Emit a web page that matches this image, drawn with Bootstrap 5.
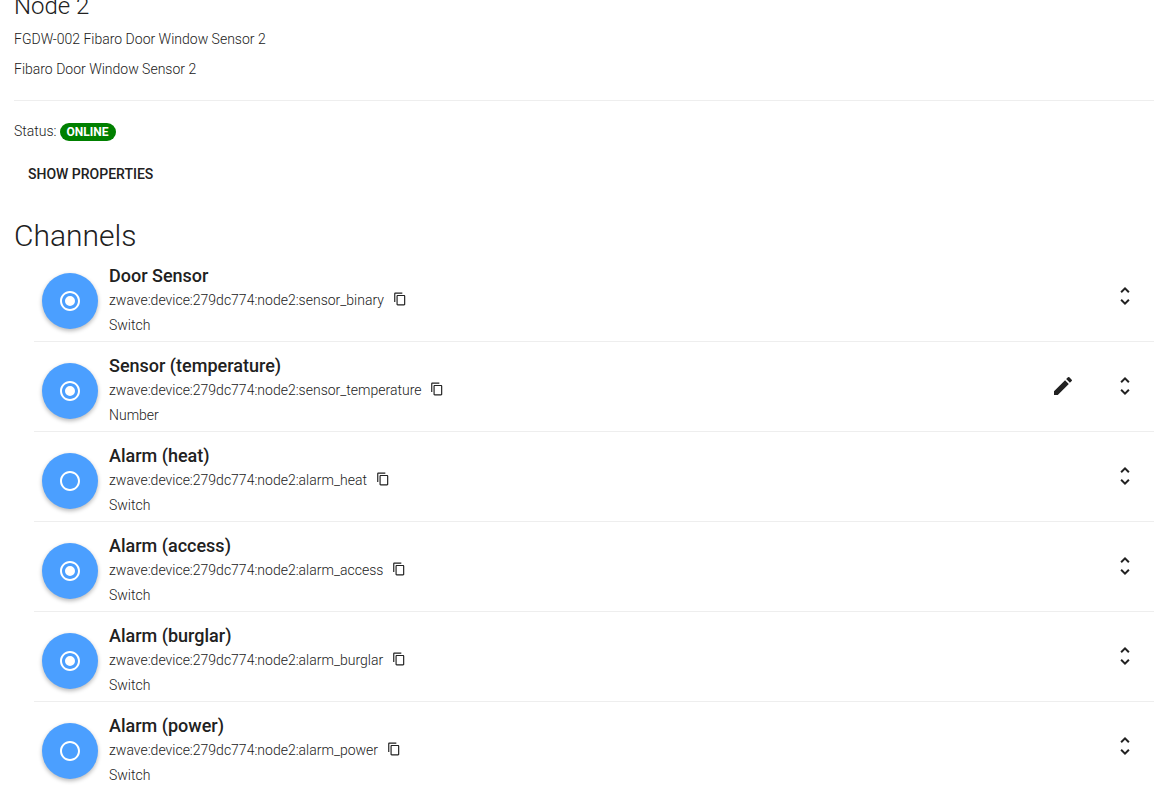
<!DOCTYPE html>
<html lang="en">
<head>
<meta charset="utf-8">
<meta name="viewport" content="width=device-width, initial-scale=1">
<title>Node 2</title>
<link href="https://cdn.jsdelivr.net/npm/bootstrap@5.3.0/dist/css/bootstrap.min.css" rel="stylesheet">
<style>
  body { font-family: Roboto, "Liberation Sans", sans-serif; font-size: 14px; font-weight: 300; line-height: 20px; color: #212121; background: #fff; }
  .thing { padding: 0 12px 0 14px; }
  .thing-title { font-size: 24px; font-weight: 300; line-height: 24px; margin: -6px 0 11px; }
  .thing-line { margin-bottom: 10px; }
  .divider { border-top: 1px solid #eee; opacity: 1; margin: 21px 0 20px; }
  .status-pill { font-size: 12px; font-weight: 700; line-height: 18px; padding: 0 7px; background: #008000; color: #fff; margin: 2px 0 0 3px; }
  .btn-flat { font-size: 14px; font-weight: 500; line-height: 36px; padding: 0 14px; border: 0; color: #212121; margin-top: 15px; }
  .section-title { font-size: 30px; font-weight: 300; line-height: 32px; margin: 28px 0 0; }
  .channels { padding-left: 20px; margin: 0; }
  .channel { height: 90px; border-bottom: 1px solid #eee; padding: 0 8px; }
  .channel-icon { width: 56px; height: 56px; background: #4b9fff; box-shadow: 0 2px 4px rgba(0,0,0,.28); margin: 21px 11px 0 0; }
  .channel-name { font-size: 18px; font-weight: 500; line-height: 24px; margin: 12px 0 0; }
  .channel-line { line-height: 25px; }
  .copy-btn, .tool-btn { border: 0; padding: 0; color: #212121; line-height: 1; }
  .copy-btn { margin: 0 0 4px 9px; }
  .tools { gap: 38px; padding: 32px 9px 0 0; }
  svg { display: block; fill: currentColor; }
</style>
</head>
<body>
<svg class="d-none" aria-hidden="true">
  <symbol id="on" viewBox="0 0 24 24"><path d="M12 7a5 5 0 1 0 0 10 5 5 0 0 0 0-10zm0-5C6.480 2 2 6.480 2 12s4.480 10 10 10 10-4.480 10-10S17.520 2 12 2zm0 18c-4.420 0-8-3.580-8-8s3.580-8 8-8 8 3.580 8 8-3.580 8-8 8z"/></symbol>
  <symbol id="off" viewBox="0 0 24 24"><path d="M12 2C6.480 2 2 6.480 2 12s4.480 10 10 10 10-4.480 10-10S17.520 2 12 2zm0 18c-4.420 0-8-3.580-8-8s3.580-8 8-8 8 3.580 8 8-3.580 8-8 8z"/></symbol>
  <symbol id="copy" viewBox="0 0 24 24"><path d="M16 1H4c-1.100 0-2 .9-2 2v14h2V3h12V1zm3 4H8c-1.100 0-2 .9-2 2v14c0 1.100.9 2 2 2h11c1.100 0 2-.9 2-2V7c0-1.100-.9-2-2-2zm0 16H8V7h11v14z"/></symbol>
  <symbol id="edit" viewBox="0 0 24 24"><path d="M3 17.250V21h3.750L17.810 9.940l-3.750-3.750L3 17.250zM20.710 7.040a1 1 0 0 0 0-1.410l-2.340-2.340a1 1 0 0 0-1.410 0l-1.830 1.830 3.750 3.750 1.830-1.830z"/></symbol>
  <symbol id="unfold" viewBox="0 0 24 24"><path d="M12 5.830L15.170 9l1.410-1.410L12 3 7.410 7.590 8.830 9 12 5.830zm0 12.340L8.830 15l-1.410 1.410L12 21l4.590-4.590L15.170 15 12 18.170z"/></symbol>
</svg>
<div class="vh-100 overflow-hidden">
<main class="thing">
  <h3 class="thing-title">Node 2</h3>
  <p class="thing-line">FGDW-002 Fibaro Door Window Sensor 2</p>
  <p class="thing-line">Fibaro Door Window Sensor 2</p>
  <hr class="divider">
  <div class="d-flex align-items-center"><span>Status:</span><span class="status-pill rounded-pill">ONLINE</span></div>
  <button type="button" class="btn btn-flat">SHOW PROPERTIES</button>
  <h2 class="section-title">Channels</h2>
  <ul class="channels list-unstyled">
    <li class="channel d-flex align-items-start">
      <div class="channel-icon rounded-circle d-flex align-items-center justify-content-center text-white flex-shrink-0"><svg width="24" height="24"><use href="#on"/></svg></div>
      <div class="flex-grow-1">
        <h4 class="channel-name">Door Sensor</h4>
        <div class="channel-line d-flex align-items-center"><span>zwave:device:279dc774:node2:sensor_binary</span><button type="button" class="btn copy-btn" aria-label="Copy"><svg width="14" height="14"><use href="#copy"/></svg></button></div>
        <div class="channel-line">Switch</div>
      </div>
      <div class="tools d-flex"><button type="button" class="btn tool-btn" aria-label="Expand"><svg width="24" height="24"><use href="#unfold"/></svg></button></div>
    </li>
    <li class="channel d-flex align-items-start">
      <div class="channel-icon rounded-circle d-flex align-items-center justify-content-center text-white flex-shrink-0"><svg width="24" height="24"><use href="#on"/></svg></div>
      <div class="flex-grow-1">
        <h4 class="channel-name">Sensor (temperature)</h4>
        <div class="channel-line d-flex align-items-center"><span>zwave:device:279dc774:node2:sensor_temperature</span><button type="button" class="btn copy-btn" aria-label="Copy"><svg width="14" height="14"><use href="#copy"/></svg></button></div>
        <div class="channel-line">Number</div>
      </div>
      <div class="tools d-flex"><button type="button" class="btn tool-btn" aria-label="Edit"><svg width="24" height="24"><use href="#edit"/></svg></button><button type="button" class="btn tool-btn" aria-label="Expand"><svg width="24" height="24"><use href="#unfold"/></svg></button></div>
    </li>
    <li class="channel d-flex align-items-start">
      <div class="channel-icon rounded-circle d-flex align-items-center justify-content-center text-white flex-shrink-0"><svg width="24" height="24"><use href="#off"/></svg></div>
      <div class="flex-grow-1">
        <h4 class="channel-name">Alarm (heat)</h4>
        <div class="channel-line d-flex align-items-center"><span>zwave:device:279dc774:node2:alarm_heat</span><button type="button" class="btn copy-btn" aria-label="Copy"><svg width="14" height="14"><use href="#copy"/></svg></button></div>
        <div class="channel-line">Switch</div>
      </div>
      <div class="tools d-flex"><button type="button" class="btn tool-btn" aria-label="Expand"><svg width="24" height="24"><use href="#unfold"/></svg></button></div>
    </li>
    <li class="channel d-flex align-items-start">
      <div class="channel-icon rounded-circle d-flex align-items-center justify-content-center text-white flex-shrink-0"><svg width="24" height="24"><use href="#on"/></svg></div>
      <div class="flex-grow-1">
        <h4 class="channel-name">Alarm (access)</h4>
        <div class="channel-line d-flex align-items-center"><span>zwave:device:279dc774:node2:alarm_access</span><button type="button" class="btn copy-btn" aria-label="Copy"><svg width="14" height="14"><use href="#copy"/></svg></button></div>
        <div class="channel-line">Switch</div>
      </div>
      <div class="tools d-flex"><button type="button" class="btn tool-btn" aria-label="Expand"><svg width="24" height="24"><use href="#unfold"/></svg></button></div>
    </li>
    <li class="channel d-flex align-items-start">
      <div class="channel-icon rounded-circle d-flex align-items-center justify-content-center text-white flex-shrink-0"><svg width="24" height="24"><use href="#on"/></svg></div>
      <div class="flex-grow-1">
        <h4 class="channel-name">Alarm (burglar)</h4>
        <div class="channel-line d-flex align-items-center"><span>zwave:device:279dc774:node2:alarm_burglar</span><button type="button" class="btn copy-btn" aria-label="Copy"><svg width="14" height="14"><use href="#copy"/></svg></button></div>
        <div class="channel-line">Switch</div>
      </div>
      <div class="tools d-flex"><button type="button" class="btn tool-btn" aria-label="Expand"><svg width="24" height="24"><use href="#unfold"/></svg></button></div>
    </li>
    <li class="channel d-flex align-items-start">
      <div class="channel-icon rounded-circle d-flex align-items-center justify-content-center text-white flex-shrink-0"><svg width="24" height="24"><use href="#off"/></svg></div>
      <div class="flex-grow-1">
        <h4 class="channel-name">Alarm (power)</h4>
        <div class="channel-line d-flex align-items-center"><span>zwave:device:279dc774:node2:alarm_power</span><button type="button" class="btn copy-btn" aria-label="Copy"><svg width="14" height="14"><use href="#copy"/></svg></button></div>
        <div class="channel-line">Switch</div>
      </div>
      <div class="tools d-flex"><button type="button" class="btn tool-btn" aria-label="Expand"><svg width="24" height="24"><use href="#unfold"/></svg></button></div>
    </li>
  </ul>
</main>
</div>
<script src="https://cdn.jsdelivr.net/npm/bootstrap@5.3.0/dist/js/bootstrap.bundle.min.js"></script>
</body>
</html>
